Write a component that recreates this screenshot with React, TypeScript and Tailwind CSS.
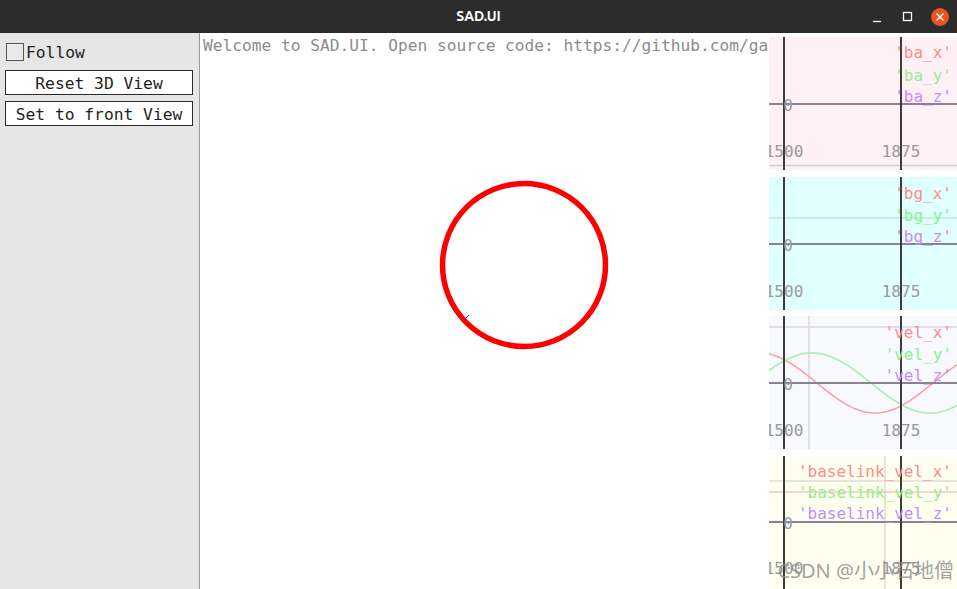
import React from "react";

const MONO = '"DejaVu Sans Mono", "Liberation Mono", monospace';

type Series = { label: string; color: string };

const RED = "#ff8c8c";
const GREEN = "#8ef08e";
const PURPLE = "#c58cff";

function wave(phase: number, period: number, amp: number, mid: number) {
  const pts: string[] = [];
  for (let x = -2; x <= 190; x += 2) {
    const y = mid - amp * Math.cos((2 * Math.PI * (x - phase)) / period);
    pts.push(`${x},${y.toFixed(2)}`);
  }
  return pts.join(" ");
}

function Plot({
  bg,
  labels,
  axisY,
  labelYs,
  tickY,
  labelX = 183,
  extra,
}: {
  bg: string;
  labels: Series[];
  axisY: number;
  labelYs: number[];
  tickY: number;
  labelX?: number;
  extra?: React.ReactNode;
}) {
  return (
    <div className="h-[133px] w-full overflow-hidden">
      <svg width="188" height="133" viewBox="0 0 188 133" className="block">
        <rect x="0" y="0" width="188" height="133" fill={bg} />
        {extra}
        <line x1="0" y1={axisY} x2="188" y2={axisY} stroke="#8a8290" strokeWidth="2" />
        <line x1="15" y1="0" x2="15" y2="133" stroke="#3c3c3c" strokeWidth="2" />
        <line x1="132" y1="0" x2="132" y2="133" stroke="#3c3c3c" strokeWidth="2" />
        <g fontFamily={MONO} fontSize="16">
          <text x="19" y={axisY + 7} fill="#9a9a9a" textAnchor="middle">
            0
          </text>
          <text x="15" y={tickY + 6} fill="#9a9a9a" textAnchor="middle">
            1500
          </text>
          <text x="132" y={tickY + 6} fill="#9a9a9a" textAnchor="middle">
            1875
          </text>
          {labels.map((s, i) => (
            <text key={s.label} x={labelX} y={labelYs[i]} fill={s.color} textAnchor="end">
              {s.label}
            </text>
          ))}
        </g>
      </svg>
    </div>
  );
}

export default function App() {
  return (
    <div className="w-[957px] h-[589px] flex flex-col overflow-hidden bg-white">
      {/* window title bar */}
      <div className="h-[33px] shrink-0 bg-[#2c2c2c] relative flex items-center justify-center">
        <span
          className="text-white font-bold text-[14px]"
          style={{ fontFamily: '"Ubuntu", "Noto Sans", "Liberation Sans", sans-serif' }}
        >
          SAD.UI
        </span>
        <div className="absolute right-0 top-0 h-[33px] flex items-center">
          <svg width="20" height="20" viewBox="0 0 20 20" className="mr-[10px]">
            <line x1="6" y1="14.5" x2="14" y2="14.5" stroke="#ffffff" strokeWidth="1.3" />
          </svg>
          <svg width="20" height="20" viewBox="0 0 20 20" className="mr-[13px]">
            <rect x="6.5" y="5.5" width="8" height="8" fill="none" stroke="#ffffff" strokeWidth="1.3" />
          </svg>
          <svg width="20" height="20" viewBox="0 0 20 20" className="mr-[7px]">
            <circle cx="10" cy="10" r="9" fill="#e95420" />
            <path d="M6.5 6.5 L13.5 13.5 M13.5 6.5 L6.5 13.5" stroke="#ffffff" strokeWidth="1.4" />
          </svg>
        </div>
      </div>

      <div className="flex flex-1 min-h-0">
        {/* side panel */}
        <div
          className="w-[200px] shrink-0 bg-[#e6e6e6] border-r border-[#9a9a9a] flex flex-col px-[5px] text-[16.3px] text-[#1e1e1e]"
          style={{ fontFamily: MONO }}
        >
          <div className="flex items-center mt-[10px] h-[18px]">
            <div className="ml-[1px] w-[18px] h-[18px] border border-[#555555] bg-[#e9e9e9]" />
            <span className="ml-[2px] leading-none translate-y-[1px]">Follow</span>
          </div>
          <button className="mt-[9px] h-[25px] w-[188px] bg-white border border-[#2a2a2a] leading-none flex items-center justify-center pt-[3px]">
            Reset 3D View
          </button>
          <button className="mt-[6px] h-[25px] w-[188px] bg-white border border-[#2a2a2a] leading-none flex items-center justify-center pt-[3px]">
            Set to front View
          </button>
        </div>

        {/* 3D view */}
        <div className="flex-1 min-w-0 relative overflow-hidden">
          <div
            className="pl-[3px] pt-[3px] leading-[20px] text-[16.2px] text-[#8c8c8c] whitespace-nowrap"
            style={{ fontFamily: MONO }}
          >
            Welcome to SAD.UI. Open source code: https://github.com/gaoxiang12/slam_in_autonomous_driving
          </div>
          <svg width="569" height="556" viewBox="0 0 569 556" className="absolute left-0 top-0">
            <circle cx="324" cy="232" r="81.5" fill="none" stroke="#ff0000" strokeWidth="5.5" />
            <line x1="265" y1="286" x2="269" y2="282" stroke="#3030c0" strokeWidth="1" />
          </svg>
        </div>

        {/* plotters */}
        <div className="w-[188px] shrink-0 flex flex-col justify-between pt-[4px] relative bg-white">
          <Plot
            bg="#fff0f5"
            axisY={67}
            tickY={114}
            labelYs={[21, 44, 65]}
            labels={[
              { label: "'ba_x'", color: RED },
              { label: "'ba_y'", color: GREEN },
              { label: "'ba_z'", color: PURPLE },
            ]}
            extra={<line x1="0" y1="128.5" x2="188" y2="128.5" stroke="#d6cfd2" strokeWidth="1.5" />}
          />
          <Plot
            bg="#e0ffff"
            axisY={67}
            tickY={114}
            labelYs={[22, 44, 65]}
            labels={[
              { label: "'bg_x'", color: RED },
              { label: "'bg_y'", color: GREEN },
              { label: "'bg_z'", color: PURPLE },
            ]}
            extra={<line x1="0" y1="41" x2="188" y2="41" stroke="#c6e0e0" strokeWidth="1.5" />}
          />
          <Plot
            bg="#f8f8ff"
            axisY={67}
            tickY={114}
            labelYs={[22, 44, 65]}
            labels={[
              { label: "'vel_x'", color: RED },
              { label: "'vel_y'", color: GREEN },
              { label: "'vel_z'", color: PURPLE },
            ]}
            extra={
              <g>
                <line x1="0" y1="11" x2="188" y2="11" stroke="#d8d8dc" strokeWidth="1.5" />
                <line x1="40" y1="0" x2="40" y2="133" stroke="#d8d8dc" strokeWidth="1.5" />
                <polyline points={wave(-10, 232, 30, 67)} fill="none" stroke="#ff9c9c" strokeWidth="1.5" />
                <polyline points={wave(43, 236, 30, 67)} fill="none" stroke="#a2f0a2" strokeWidth="1.5" />
              </g>
            }
          />
          <Plot
            bg="#fffff0"
            axisY={66}
            tickY={112}
            labelYs={[21, 42, 63]}
            labels={[
              { label: "'baselink_vel_x'", color: RED },
              { label: "'baselink_vel_y'", color: GREEN },
              { label: "'baselink_vel_z'", color: PURPLE },
            ]}
            extra={
              <g>
                <line x1="0" y1="25" x2="188" y2="25" stroke="#dcdcd2" strokeWidth="1.5" />
                <line x1="116" y1="0" x2="116" y2="133" stroke="#dcdcd2" strokeWidth="1.5" />
                <line x1="0" y1="36" x2="188" y2="36" stroke="#ffa8a8" strokeWidth="1" />
              </g>
            }
          />
          {/* watermark */}
          <div
            className="absolute right-[3px] bottom-[8px] text-[20px] text-[#8a8a8a]/80 whitespace-nowrap leading-none"
            style={{ fontFamily: '"Noto Sans", "Noto Sans CJK SC", sans-serif' }}
          >
            CSDN @小小石地僧
          </div>
        </div>
      </div>
    </div>
  );
}
